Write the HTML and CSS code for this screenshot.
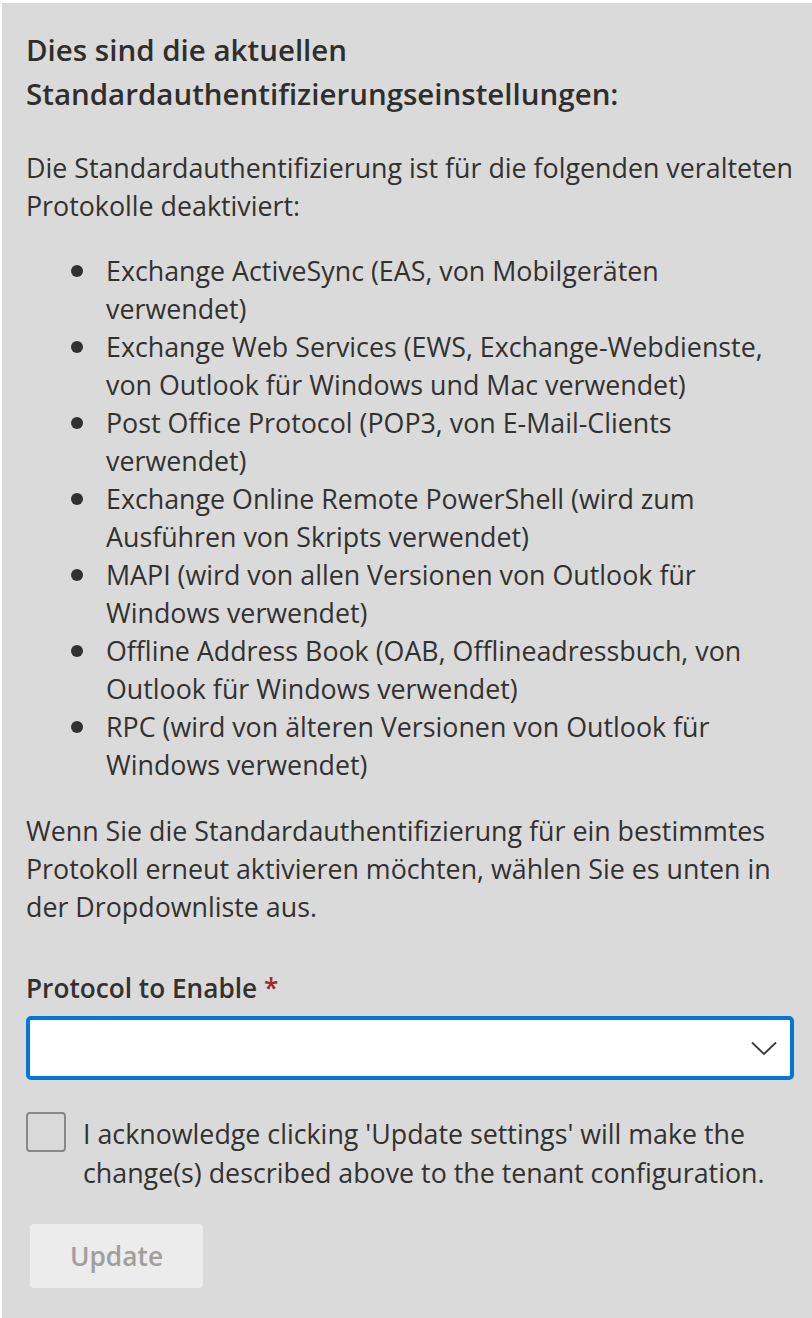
FILE: index.html
```html
<!DOCTYPE html>
<html lang="de">
<head>
<meta charset="utf-8">
<title>Standardauthentifizierung</title>
<link rel="stylesheet" href="styles.css">
</head>
<body>
<main class="panel">
  <h2 class="title">Dies sind die aktuellen<br>Standardauthentifizierungseinstellungen:</h2>
  <p class="text">Die Standardauthentifizierung ist für die folgenden veralteten<br>Protokolle deaktiviert:</p>
  <ul class="protocols">
    <li>Exchange ActiveSync (EAS, von Mobilgeräten<br>verwendet)</li>
    <li>Exchange Web Services (EWS, Exchange-Webdienste,<br>von Outlook für Windows und Mac verwendet)</li>
    <li>Post Office Protocol (POP3, von E-Mail-Clients<br>verwendet)</li>
    <li>Exchange Online Remote PowerShell (wird zum<br>Ausführen von Skripts verwendet)</li>
    <li>MAPI (wird von allen Versionen von Outlook für<br>Windows verwendet)</li>
    <li>Offline Address Book (OAB, Offlineadressbuch, von<br>Outlook für Windows verwendet)</li>
    <li>RPC (wird von älteren Versionen von Outlook für<br>Windows verwendet)</li>
  </ul>
  <p class="text text-after">Wenn Sie die Standardauthentifizierung für ein bestimmtes<br>Protokoll erneut aktivieren möchten, wählen Sie es unten in<br>der Dropdownliste aus.</p>

  <label class="field-label" for="protocol">Protocol to Enable <span class="required">*</span></label>
  <div class="select" id="protocol" role="combobox" tabindex="0">
    <svg class="chevron" width="26" height="15" viewBox="0 0 26 15" aria-hidden="true">
      <path d="M1 1.5 L13 13 L25 1.5" fill="none" stroke="#3b3a39" stroke-width="1.8"/>
    </svg>
  </div>

  <div class="ack">
    <span class="checkbox"></span>
    <span class="ack-text">I acknowledge clicking 'Update settings' will make the<br>change(s) described above to the tenant configuration.</span>
  </div>

  <button class="update" disabled>Update</button>
</main>
</body>
</html>
```

FILE: styles.css
```css
html, body {
  margin: 0;
  padding: 0;
  background: #ffffff;
}

body {
  font-family: "Open Sans", "Noto Sans", sans-serif;
  color: #323130;
}

.panel {
  margin: 3px 0 0 2px;
  min-height: 1315px;
  box-sizing: border-box;
  background: #dadada;
  padding: 25px 0 30px 24px;
}

.title {
  margin: 0;
  font-size: 29.5px;
  font-weight: 600;
  line-height: 44px;
  color: #2f2e2d;
  white-space: nowrap;
}

.text {
  margin: 33px 0 0;
  font-size: 26.8px;
  line-height: 38px;
  white-space: nowrap;
}

.protocols {
  list-style: none;
  margin: 27px 0 0;
  padding: 0;
  font-size: 26.8px;
  line-height: 38px;
  white-space: nowrap;
}

.protocols li {
  display: flex;
  align-items: flex-start;
}

.protocols li::before {
  content: "";
  flex: 0 0 12px;
  height: 12px;
  margin: 13px 23px 0 45px;
  border-radius: 50%;
  background: #323130;
}

.text-after {
  margin-top: 28px;
}

.field-label {
  display: block;
  margin-top: 43px;
  font-size: 26.2px;
  font-weight: 600;
  line-height: 38px;
}

.required {
  color: #a4262c;
}

.select {
  margin-top: 9px;
  height: 64px;
  box-sizing: border-box;
  width: 768px;
  border: 4px solid #0078d4;
  border-radius: 5px;
  background: #ffffff;
  display: flex;
  align-items: center;
  justify-content: flex-end;
  padding-right: 13px;
}

.chevron {
  display: block;
}

.ack {
  display: flex;
  align-items: flex-start;
  gap: 17px;
  margin-top: 32px;
}

.checkbox {
  flex: 0 0 40px;
  height: 40px;
  box-sizing: border-box;
  border: 2px solid #8a8886;
  border-radius: 4px;
}

.ack-text {
  font-size: 26.8px;
  line-height: 39px;
  margin-top: 2px;
  white-space: nowrap;
}

.update {
  display: block;
  margin: 32px 0 0 4px;
  width: 173px;
  height: 64px;
  border: none;
  border-radius: 4px;
  background: #ececec;
  color: #a19f9d;
  font-family: "Open Sans", "Noto Sans", sans-serif;
  font-size: 26.3px;
  font-weight: 600;
}
```
